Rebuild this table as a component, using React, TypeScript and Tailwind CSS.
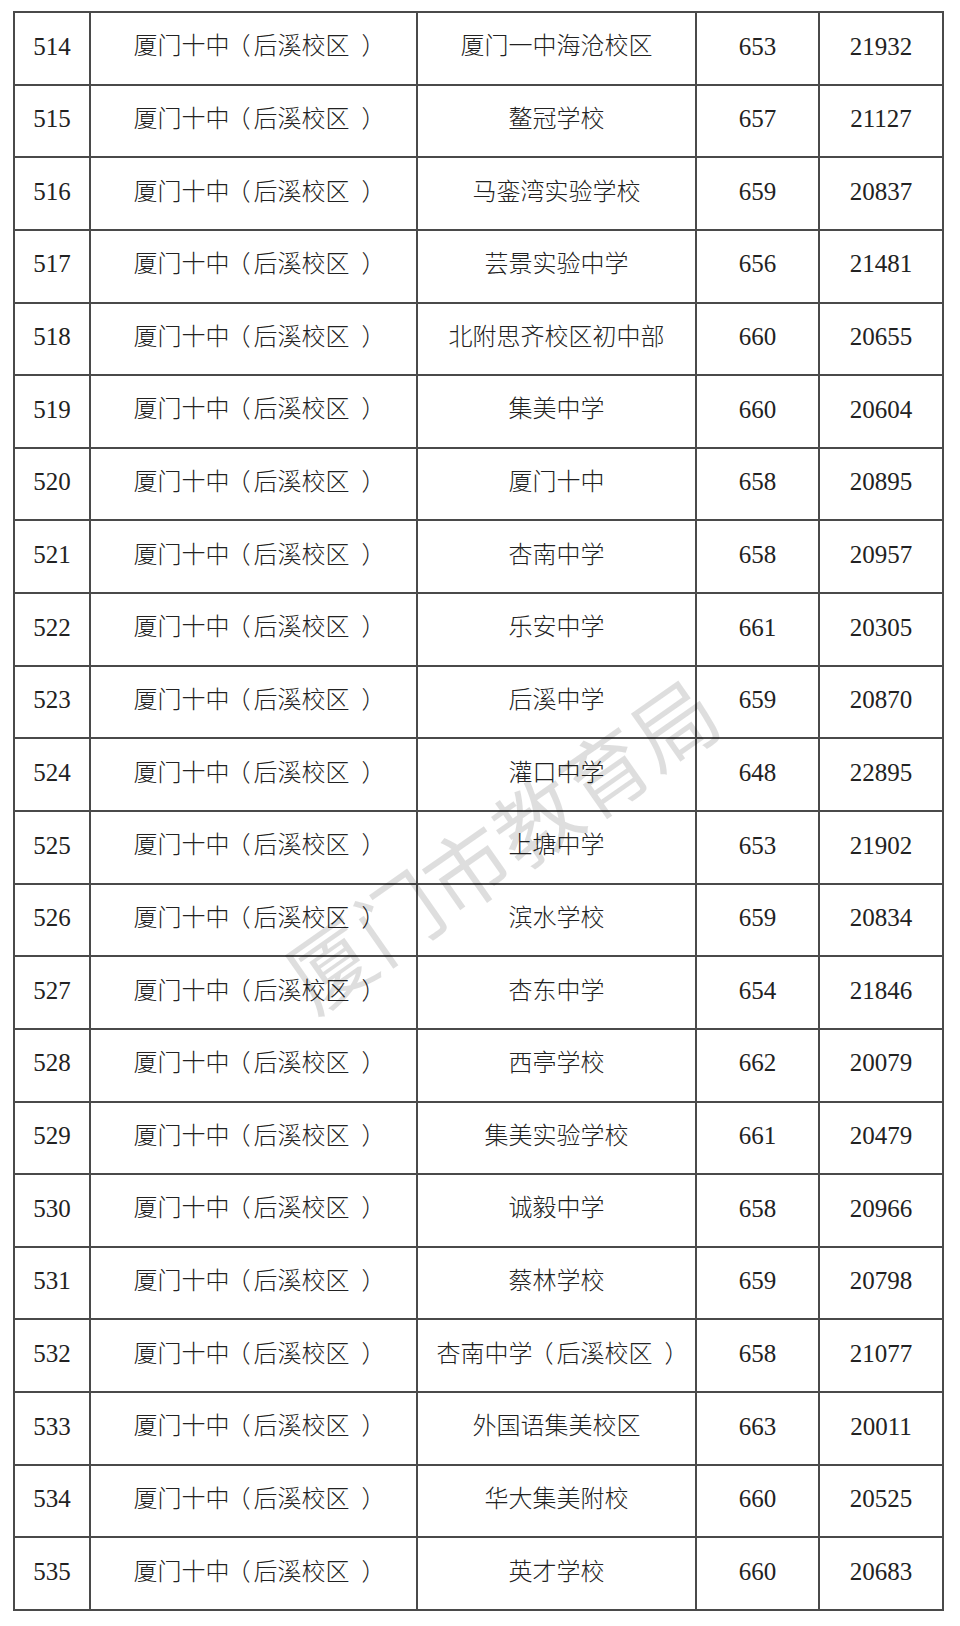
const rows: [number, string, number, number][] = [
  [514, "厦门一中海沧校区", 653, 21932],
  [515, "鳌冠学校", 657, 21127],
  [516, "马銮湾实验学校", 659, 20837],
  [517, "芸景实验中学", 656, 21481],
  [518, "北附思齐校区初中部", 660, 20655],
  [519, "集美中学", 660, 20604],
  [520, "厦门十中", 658, 20895],
  [521, "杏南中学", 658, 20957],
  [522, "乐安中学", 661, 20305],
  [523, "后溪中学", 659, 20870],
  [524, "灌口中学", 648, 22895],
  [525, "上塘中学", 653, 21902],
  [526, "滨水学校", 659, 20834],
  [527, "杏东中学", 654, 21846],
  [528, "西亭学校", 662, 20079],
  [529, "集美实验学校", 661, 20479],
  [530, "诚毅中学", 658, 20966],
  [531, "蔡林学校", 659, 20798],
  [532, "杏南中学（后溪校区）", 658, 21077],
  [533, "外国语集美校区", 663, 20011],
  [534, "华大集美附校", 660, 20525],
  [535, "英才学校", 660, 20683],
];

const font = { fontFamily: '"Liberation Serif", "Noto Sans CJK SC", serif' };

export default function App() {
  return (
    <div className="relative w-[960px] h-[1626px] bg-white overflow-hidden text-[#222]" style={font}>
      <div className="absolute left-[13px] top-[11px] w-[931px] h-[1600px] grid grid-cols-[74px_325px_277px_121px_122px] grid-rows-[repeat(22,minmax(0,1fr))] gap-[2px] p-[2px] bg-[#4a4a4a]">
        {rows.map(([no, school, score, rank]) => (
          <Row key={no} no={no} school={school} score={score} rank={rank} />
        ))}
      </div>

      {/* watermark */}
      <div className="pointer-events-none absolute left-[500px] top-[842px] -translate-x-1/2 -translate-y-1/2 -rotate-[35deg] whitespace-nowrap text-[84px] font-normal leading-none text-black/[0.13]"
        style={{ fontFamily: '"Noto Sans CJK SC", sans-serif' }}>
        厦门市教育局
      </div>
    </div>
  );
}

function Row({ no, school, score, rank }: { no: number; school: string; score: number; rank: number }) {
  return (
    <>
      <Cell num>{no}</Cell>
      <Cell><Cjk text="厦门十中（后溪校区）" /></Cell>
      <Cell><Cjk text={school} /></Cell>
      <Cell num>{score}</Cell>
      <Cell num>{rank}</Cell>
    </>
  );
}

// the source font sets its parens further apart than Noto does; nudge the glyphs
function Cjk({ text }: { text: string }) {
  return (
    <span className="whitespace-nowrap">
      {[...text].map((c, i) =>
        c === "（" ? (
          <span key={i} className="inline-block -translate-x-[3px]">（</span>
        ) : c === "）" ? (
          <span key={i} className="inline-block translate-x-[12px]">）</span>
        ) : (
          c
        ),
      )}
    </span>
  );
}

function Cell({ num, children }: { num?: boolean; children: React.ReactNode }) {
  return (
    <div className={`flex items-center justify-center bg-white pb-[4px] ${num ? "text-[25px]" : "text-[24px] font-light"}`}>
      {children}
    </div>
  );
}
